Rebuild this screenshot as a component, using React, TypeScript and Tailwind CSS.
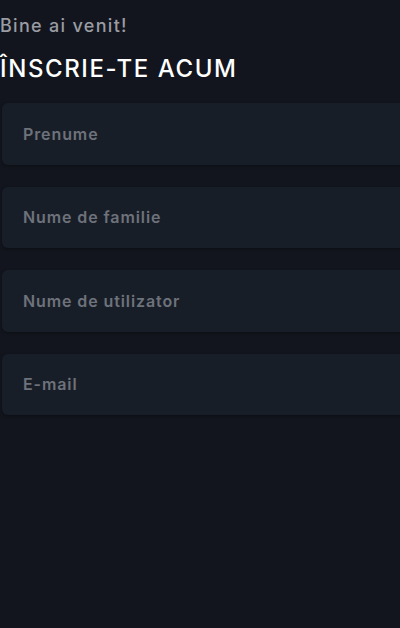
const FIELDS = ["Prenume", "Nume de familie", "Nume de utilizator", "E-mail"];

export default function App() {
  return (
    <div
      className="w-[400px] h-[628px] overflow-hidden bg-[#12151d]"
      style={{ fontFamily: "Inter, 'Open Sans', sans-serif" }}
    >
      <div className="pt-[14px]">
        <p className="text-[18px] leading-[24px] font-medium text-[#9a9ca3] tracking-[1.3px]">Bine ai venit!</p>
        <h1 className="mt-[16px] text-[24px] leading-[30px] font-medium text-white tracking-[1.6px]">ÎNSCRIE-TE ACUM</h1>
      </div>
      <div className="mt-[19px] pl-[2px] flex flex-col gap-[22px]">
        {FIELDS.map((f) => (
          <input
            key={f}
            placeholder={f}
            className="w-[420px] h-[61.5px] rounded-l-[6px] bg-[#181e28] shadow-[0_1px_3px_rgba(0,0,0,0.35)] pl-[21px] text-[16px] font-semibold tracking-[0.9px] text-[#c9ccd2] placeholder:text-[#6e727b] outline-none"
          />
        ))}
      </div>
    </div>
  );
}
